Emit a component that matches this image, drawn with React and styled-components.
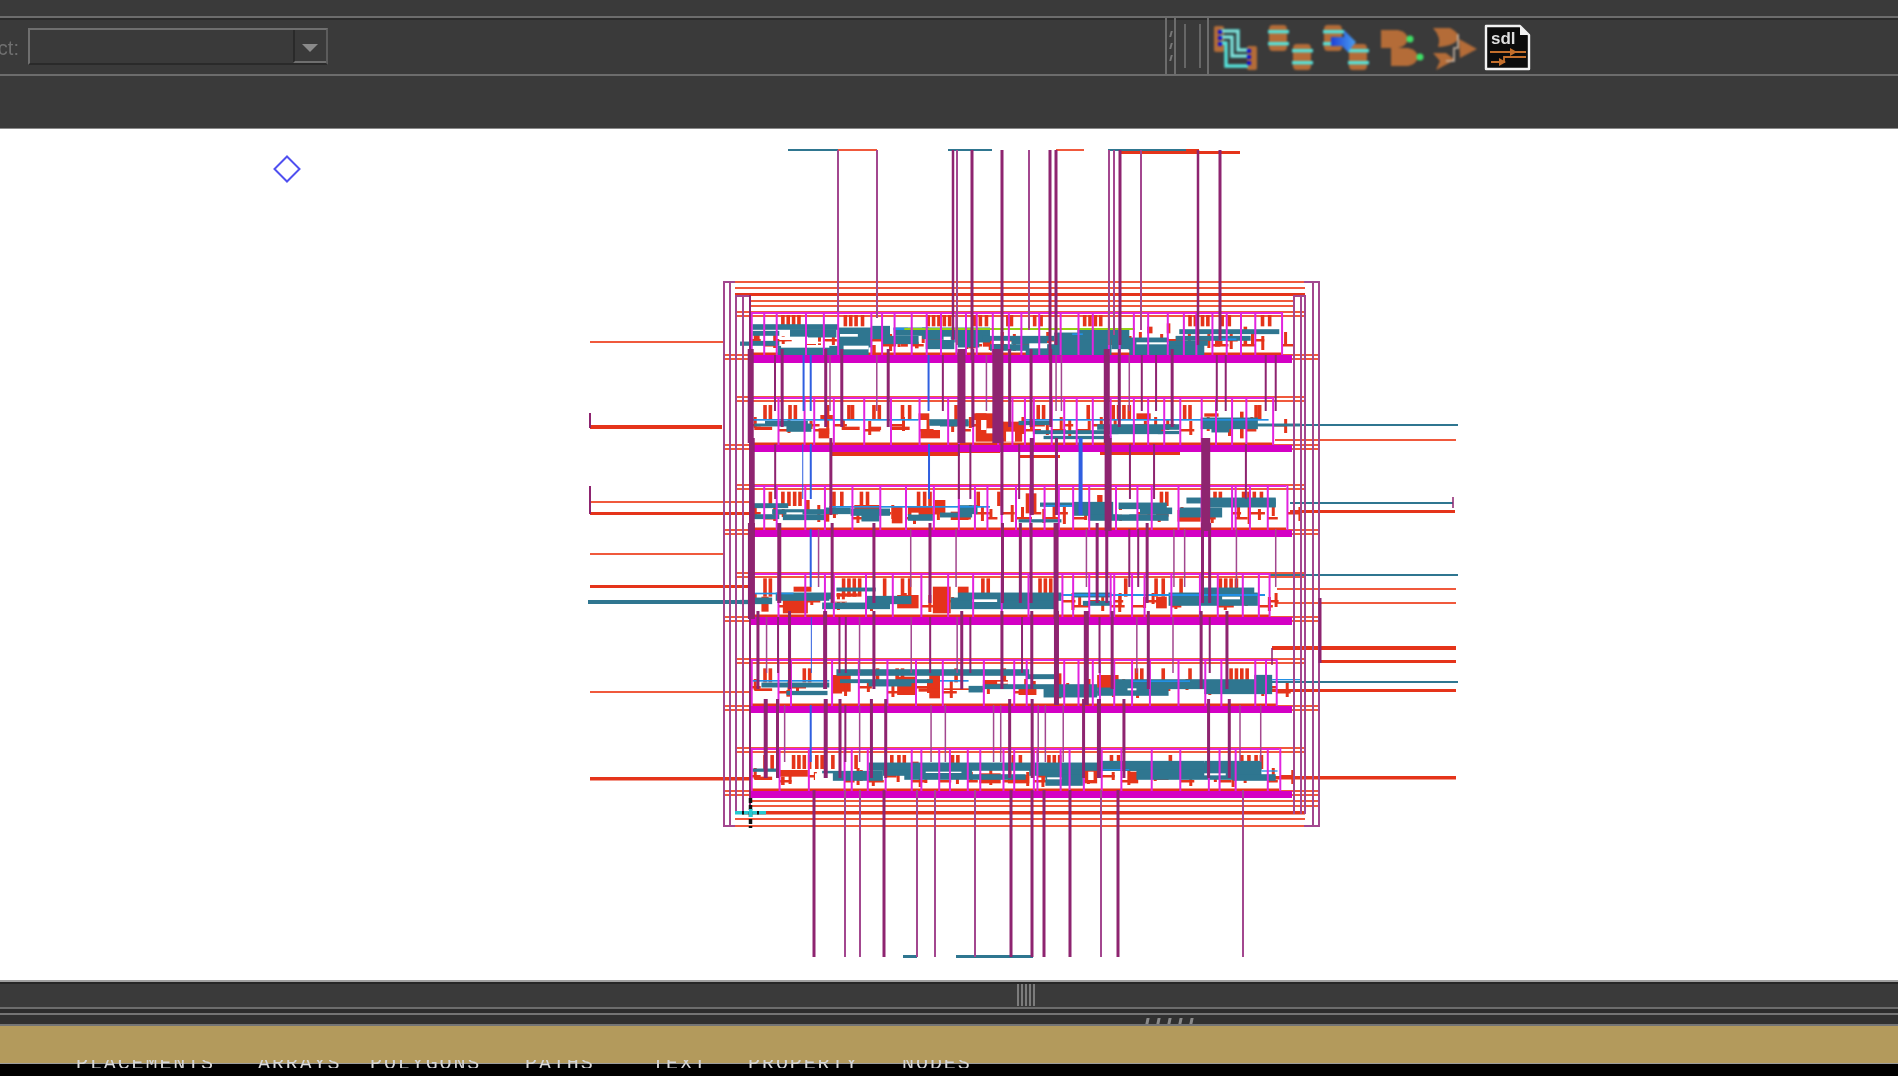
import styled, { createGlobalStyle } from 'styled-components';

const Global = createGlobalStyle`
  html, body { margin: 0; padding: 0; background: #000; overflow: hidden; }
  #root { width: 1898px; height: 1076px; }
`;

const RED = '#e5341a';
const ORANGE = '#f0593c';
const TEAL = '#2f7690';
const PURPLE = '#8e2470';
const THIN = '#a3478f';
const BLUE = '#2f5fe0';
const SKY = '#2290e4';
const GREEN = '#93d014';
const MAGENTA = '#d400c4';
const CELL = '#e124de';

// zoom crop coordinates -> page coordinates
const rowX = (x) => 740 + x / 2.8;
const wideX = (x) => 580 + x / 1.742;

const rows = [
  {
    base: 305, top: 312, rail: 355, railEnd: 363, right: 1281, barY: [30, 64],
    cells: [30, 65, 100, 182, 232, 272, 365, 395, 430, 478, 520, 560, 603, 630, 660, 705, 750, 785, 835, 895, 945, 985, 1030, 1060, 1100, 1140, 1195, 1240, 1275, 1320, 1360, 1400, 1440, 1515],
    bars: [115, 130, 145, 160, 290, 305, 320, 338, 522, 537, 552, 567, 582, 652, 668, 685, 745, 755, 820, 838, 960, 975, 990, 1005, 1255, 1270, 1290, 1305, 1345, 1365, 1458, 1478],
    blocks: [[450, 115, 470, 125], [490, 110, 500, 130], [590, 80, 610, 95], [640, 100, 660, 130], [680, 110, 700, 125], [1140, 65, 1155, 85], [1195, 55, 1205, 85], [1330, 100, 1345, 125], [1410, 65, 1420, 80], [1410, 95, 1420, 120], [1060, 90, 1085, 110], [370, 120, 380, 150], [40, 88, 55, 105], [400, 90, 420, 105]],
    teal: [[35, 60, 275, 72], [35, 80, 110, 90], [30, 110, 110, 120], [105, 125, 360, 148], [140, 75, 270, 95], [275, 70, 370, 125], [370, 65, 420, 100], [400, 95, 500, 115], [430, 70, 530, 90], [510, 70, 700, 100], [520, 105, 600, 130], [600, 85, 700, 110], [610, 110, 670, 125], [680, 95, 880, 105], [700, 120, 890, 135], [760, 100, 860, 115], [800, 130, 950, 148], [880, 85, 1040, 148], [945, 75, 1090, 100], [1040, 100, 1200, 130], [1090, 120, 1300, 148], [1200, 110, 1310, 120], [1220, 95, 1430, 105], [1230, 75, 1510, 85], [0, 112, 35, 120]],
    white: [[110, 95, 190, 105], [115, 120, 250, 128], [130, 110, 240, 115], [280, 87, 330, 95], [290, 122, 360, 133], [570, 95, 590, 105], [810, 115, 860, 130], [1110, 112, 1200, 118]],
    sky: [[430, 68, 470, 75], [930, 85, 960, 90], [1340, 100, 1390, 106]],
    green: [[460, 69, 1105, 75]],
  },
  {
    base: 305, top: 397, rail: 445, railEnd: 452, right: 1272, barY: [300, 345],
    cells: [30, 105, 178, 205, 260, 345, 420, 500, 580, 610, 650, 720, 760, 795, 820, 870, 905, 940, 985, 1035, 1100, 1140, 1185, 1230, 1290, 1330, 1375, 1415, 1490],
    bars: [65, 80, 135, 150, 300, 310, 370, 385, 450, 470, 240, 1240, 1255, 1440, 1450, 1040, 1055, 1070, 1085, 830, 845, 600, 970],
    blocks: [[40, 365, 90, 375], [285, 365, 335, 375], [365, 365, 395, 375], [425, 365, 475, 375], [500, 325, 530, 345], [505, 375, 560, 400], [660, 325, 720, 410], [655, 325, 690, 345], [725, 350, 790, 410], [1110, 325, 1150, 345], [1300, 325, 1340, 335], [1400, 320, 1410, 400], [225, 330, 260, 345], [220, 370, 250, 400]],
    teal: [[70, 350, 190, 358], [130, 360, 200, 378], [530, 345, 640, 360], [560, 350, 640, 362], [780, 350, 870, 358], [820, 378, 1060, 385], [850, 395, 1040, 400], [1000, 360, 1230, 372], [1040, 370, 1180, 385], [1170, 380, 1230, 385], [1290, 340, 1450, 370], [1320, 370, 1370, 380], [1440, 358, 1568, 362], [40, 358, 200, 362]],
    white: [[675, 345, 690, 375], [690, 370, 715, 385], [745, 380, 770, 410]],
    sky: [[35, 342, 500, 347], [800, 342, 1480, 347]],
    green: [],
  },
  {
    base: 480, top: 485, rail: 530, railEnd: 537, right: 1286, barY: [35, 78],
    cells: [30, 65, 100, 180, 235, 312, 390, 462, 540, 610, 655, 690, 730, 770, 810, 850, 890, 930, 975, 1050, 1110, 1150, 1225, 1290, 1375, 1385, 1425, 1475, 1530],
    bars: [115, 132, 148, 163, 258, 280, 335, 352, 495, 512, 527, 662, 720, 1175, 1190, 1405, 1420, 1435, 1455, 1325, 1340, 80],
    blocks: [[425, 80, 455, 130], [320, 75, 390, 100], [185, 60, 195, 90], [470, 80, 540, 105], [545, 60, 575, 100], [590, 95, 640, 120], [800, 40, 830, 100], [1000, 45, 1015, 70], [1225, 90, 1290, 125], [1165, 100, 1200, 110], [235, 100, 250, 125]],
    teal: [[35, 72, 135, 82], [35, 105, 110, 115], [90, 90, 240, 100], [120, 105, 240, 118], [240, 85, 310, 100], [310, 88, 420, 105], [340, 95, 390, 122], [470, 105, 540, 120], [610, 78, 665, 100], [560, 100, 650, 110], [780, 120, 900, 125], [840, 70, 930, 78], [935, 68, 1045, 105], [975, 105, 1200, 120], [1060, 70, 1195, 85], [1120, 85, 1210, 100], [1250, 55, 1500, 68], [1230, 85, 1350, 110], [1390, 58, 1500, 78], [1290, 70, 1500, 80]],
    white: [[130, 97, 175, 103], [1060, 90, 1090, 103], [480, 98, 500, 104]],
    sky: [[250, 78, 700, 83], [850, 75, 930, 80]],
    green: [],
  },
  {
    base: 480, top: 573, rail: 617, railEnd: 625, right: 1269, barY: [295, 350],
    cells: [30, 105, 180, 235, 260, 350, 425, 505, 580, 650, 730, 805, 900, 930, 975, 1035, 1045, 1095, 1130, 1205, 1285, 1335, 1405, 1450, 1480],
    bars: [65, 80, 285, 300, 315, 330, 400, 450, 470, 675, 690, 835, 850, 865, 880, 1075, 1160, 1180, 1230, 1340, 1355, 1370, 1385],
    blocks: [[120, 340, 190, 400], [150, 320, 200, 335], [270, 340, 330, 350], [440, 345, 500, 385], [540, 320, 590, 400], [610, 320, 640, 340], [800, 340, 900, 350], [1165, 350, 1195, 385], [60, 350, 80, 395]],
    teal: [[35, 355, 90, 370], [100, 340, 260, 360], [230, 370, 420, 385], [270, 325, 380, 332], [350, 350, 480, 370], [590, 355, 890, 385], [610, 340, 900, 360], [930, 340, 1040, 350], [960, 365, 1040, 375], [1200, 340, 1450, 375], [1290, 325, 1440, 340], [0, 362, 35, 370]],
    white: [[250, 358, 330, 365], [650, 358, 720, 366], [1350, 350, 1400, 358]],
    sky: [[35, 338, 150, 343], [900, 342, 1470, 348]],
    green: [],
  },
  {
    base: 655, top: 659, rail: 706, railEnd: 713, right: 1276, barY: [40, 82],
    cells: [30, 105, 140, 255, 330, 410, 490, 565, 680, 765, 800, 905, 945, 985, 1005, 1045, 1095, 1145, 1225, 1300, 1345, 1440, 1470, 1500],
    bars: [65, 80, 175, 190, 380, 435, 450, 600, 735, 1105, 1120, 1180, 1255, 1370, 1385, 1400, 1415],
    blocks: [[530, 60, 560, 130], [500, 100, 560, 110], [570, 100, 680, 105], [680, 75, 750, 95], [780, 90, 830, 120], [440, 65, 490, 120], [880, 55, 900, 130], [1000, 60, 1060, 100], [1165, 97, 1205, 108], [260, 60, 310, 110], [40, 100, 90, 108], [130, 105, 140, 125]],
    teal: [[270, 45, 810, 60], [60, 85, 250, 95], [130, 110, 245, 118], [280, 75, 540, 82], [360, 85, 480, 92], [680, 90, 1000, 100], [640, 95, 680, 110], [800, 60, 880, 70], [850, 100, 1000, 125], [1000, 100, 1200, 120], [1050, 75, 1490, 100], [1300, 100, 1490, 115], [1440, 62, 1490, 100]],
    white: [[1085, 100, 1110, 106], [720, 80, 750, 86]],
    sky: [[35, 75, 250, 80], [560, 75, 640, 80], [1100, 76, 1260, 81], [1490, 72, 1568, 76]],
    green: [],
  },
  {
    base: 655, top: 748, rail: 791, railEnd: 798, right: 1279, barY: [300, 342],
    cells: [30, 108, 190, 290, 310, 355, 405, 478, 505, 555, 585, 635, 670, 735, 765, 820, 830, 895, 920, 960, 1010, 1065, 1150, 1230, 1310, 1340, 1385, 1475, 1510],
    bars: [65, 85, 145, 160, 175, 190, 210, 225, 255, 320, 420, 440, 455, 590, 605, 760, 780, 860, 875, 890, 1035, 1055, 1200, 1400, 1420, 1440, 1455],
    blocks: [[110, 345, 190, 365], [40, 365, 90, 375], [480, 320, 500, 345], [965, 340, 1000, 385], [1090, 350, 1115, 385], [1160, 365, 1200, 375], [560, 365, 610, 370], [670, 355, 730, 385], [750, 360, 810, 385], [115, 365, 125, 390]],
    teal: [[230, 350, 400, 375], [360, 325, 1460, 345], [400, 345, 650, 360], [460, 360, 800, 372], [810, 345, 960, 360], [855, 360, 960, 390], [1000, 320, 1300, 345], [1110, 345, 1380, 372], [1300, 320, 1460, 365], [1380, 360, 1500, 375], [35, 343, 110, 348]],
    white: [[210, 355, 260, 380], [520, 350, 620, 354], [975, 350, 990, 375], [1300, 355, 1360, 361], [860, 367, 900, 373]],
    sky: [[1015, 342, 1090, 346], [1460, 346, 1505, 350]],
    green: [],
  },
];

// vertical wires between the rows: [x, width, colour flag]
const gaps = [
  {
    y1: 363, y2: 397, x: rowX,
    lines: [[30, 6], [98, 2], [118, 3], [178, 2, 'b'], [198, 2, 'b'], [240, 3], [252, 1.5], [285, 3], [383, 1.5], [415, 3], [528, 2, 'b'], [568, 2], [620, 8], [652, 3], [690, 1.5], [722, 11], [755, 3], [815, 3], [870, 3], [885, 1.5], [900, 1.5], [1027, 6], [1062, 3], [1090, 1.5], [1125, 2], [1165, 2], [1210, 3], [1335, 2], [1360, 2], [1472, 2], [1500, 2]],
  },
  {
    y1: 452, y2: 485, x: wideX,
    lines: [[300, 5], [340, 2], [388, 1, 'b'], [402, 2, 'b'], [437, 3], [608, 2, 'b'], [660, 2], [680, 2], [735, 3], [765, 2], [787, 4], [830, 3], [872, 4, 'b'], [920, 7], [958, 2], [1000, 2], [1090, 9], [1160, 2]],
  },
  {
    y1: 537, y2: 573, x: rowX,
    lines: [[32, 7], [110, 4], [198, 2, 'b'], [220, 1.5], [258, 3], [375, 3], [478, 1.5], [532, 3], [605, 1.5], [735, 3], [785, 3], [815, 3], [885, 5], [970, 1.5], [1000, 3], [1027, 3], [1090, 2], [1115, 2], [1140, 3], [1215, 1.5], [1245, 1.5], [1295, 3], [1315, 3], [1390, 1.5], [1500, 1.5]],
  },
  {
    y1: 625, y2: 659, x: wideX,
    lines: [[310, 3], [325, 1.5], [345, 2], [365, 3], [403, 1, 'b'], [427, 4], [452, 2], [463, 2], [487, 1.5], [512, 3], [577, 1.5], [610, 2], [657, 1.5], [665, 3], [680, 2], [735, 3], [770, 2], [787, 3], [830, 5], [882, 5], [905, 2], [927, 3], [970, 1.5], [990, 3], [1033, 1.5], [1082, 3], [1097, 2], [1127, 3]],
  },
  {
    y1: 713, y2: 748, x: rowX,
    lines: [[72, 4], [105, 3], [125, 1.5], [198, 2, 'b'], [240, 4], [280, 3], [295, 2], [335, 1.5], [368, 3], [408, 3], [535, 1.5], [575, 1.5], [710, 1.5], [730, 1.5], [755, 3], [818, 3], [835, 1.5], [855, 1.5], [905, 1.5], [962, 3], [1005, 4], [1075, 3], [1312, 3], [1370, 3], [1400, 1.5], [1458, 1.5]],
  },
];

const topPins = [[838, 2, 312], [877, 2, 318], [953, 2.5, 340], [957, 2, 345], [972, 3, 360], [1002, 3, 350], [1029, 2, 330], [1050, 3, 360], [1056, 3, 345], [1109, 2, 345], [1114, 2, 335], [1120, 3, 345], [1141, 2, 330], [1198, 2.5, 345], [1220, 3, 340]];
const bottomPins = [[814, 3], [845, 2], [860, 2], [884, 3], [917, 2], [935, 2], [975, 2], [1011, 3], [1032, 3], [1044, 3], [1070, 3], [1101, 2], [1118, 3], [1243, 2]];

// [x1, x2, y, height, colour]
const wires = [
  [788, 838, 149, 2, TEAL], [838, 877, 149, 2, ORANGE], [948, 992, 149, 2, TEAL], [1056, 1084, 149, 2, ORANGE], [1108, 1186, 149, 2, TEAL], [1186, 1199, 149, 2, RED], [1120, 1240, 151, 3, RED],
  [903, 917, 955, 3, TEAL], [956, 1033, 955, 3, TEAL],
  [590, 723, 341, 2, ORANGE], [590, 722, 425, 4, RED], [590, 750, 501, 2, ORANGE], [590, 750, 512, 3, RED], [590, 725, 553, 2, ORANGE], [590, 750, 585, 3, RED], [588, 750, 600, 4, TEAL], [590, 750, 691, 2, ORANGE], [590, 750, 777, 3.5, RED],
  [1280, 1458, 424, 2, TEAL], [1275, 1456, 439, 2, ORANGE], [1290, 1453, 502, 2, TEAL], [1290, 1455, 510, 3, RED], [1269, 1458, 574, 2, TEAL], [1277, 1456, 588, 2, ORANGE], [1275, 1456, 602, 2, ORANGE], [1272, 1456, 646, 4, RED], [1320, 1456, 660, 3, RED], [1272, 1458, 681, 2, TEAL], [1272, 1456, 689, 3, RED], [1272, 1456, 776, 3.5, RED],
  [723, 1318, 281, 2, ORANGE], [735, 1305, 287, 2, ORANGE], [735, 1305, 293, 3, RED], [749, 1293, 300, 2, ORANGE], [749, 1293, 305, 2, ORANGE],
  [749, 1318, 800, 2, ORANGE], [749, 1318, 805, 2, ORANGE], [742, 1305, 811, 3.5, RED], [735, 1305, 818, 2, ORANGE], [723, 1318, 825, 2, ORANGE],
  [830, 960, 452, 4, RED], [960, 1000, 449, 4, RED], [1100, 1180, 452, 3, RED], [1020, 1060, 455, 3, RED],
];

const stubs = [[590, 413, 428, 2], [590, 486, 514, 2], [1453, 497, 508, 1.5], [1320, 598, 663, 3], [1272, 648, 665, 1.5]];
const frame = [723, 729, 735, 742, 749, 1293, 1300, 1304, 1312, 1318];

const Rect = ({ x1, y1, x2, y2, fill }) => <rect x={x1} y={y1} width={x2 - x1} height={y2 - y1} fill={fill} />;

const Patches = ({ list, row, fill, pad = 0 }) =>
  list.map(([a, b, c, d], i) => (
    <Rect key={i} x1={rowX(a)} x2={rowX(c)} y1={row.base + b / 3 - pad} y2={row.base + d / 3 + pad} fill={fill} />
  ));

const Row = ({ row }) => {
  const left = rowX(row.cells[0]);
  const mid = row.top + 20;
  return (
    <g>
      {[-1, 3].map((d) => (
        <Rect key={d} x1={723} x2={1318} y1={row.rail + d} y2={row.rail + d + 2} fill={ORANGE} />
      ))}
      <Rect x1={736} x2={1305} y1={row.top - 1} y2={row.top + 1} fill={ORANGE} />
      <Rect x1={736} x2={1305} y1={row.top + 3} y2={row.top + 5} fill={ORANGE} />
      <Rect x1={left} x2={row.right} y1={row.rail - 2.5} y2={row.rail} fill={RED} />
      {row.bars.map((b) => (
        <Rect key={b} x1={rowX(b)} x2={rowX(b) + 3.6} y1={row.base + row.barY[0] / 3} y2={row.base + row.barY[1] / 3} fill={RED} />
      ))}
      <Patches list={row.blocks} row={row} fill={RED} />
      {row.cells.map((c, i) => (
        <g key={c}>
          <Rect x1={rowX(c) + 3 + (i * 7) % 11} x2={rowX(c) + 6 + (i * 7) % 11} y1={mid + (i % 3) * 2} y2={mid + 11 + (i * 5) % 9} fill={RED} />
          <Rect x1={rowX(c) + 1} x2={rowX(c) + 10 + (i * 3) % 8} y1={mid + 7 + (i * 5) % 10} y2={mid + 9.5 + (i * 5) % 10} fill={RED} />
        </g>
      ))}
      <Patches list={row.teal} row={row} fill={TEAL} pad={0.8} />
      <Patches list={row.white} row={row} fill="#fff" />
      <Patches list={row.sky} row={row} fill={SKY} />
      <Patches list={row.green} row={row} fill={GREEN} />
      {row.cells.map((c) => (
        <Rect key={c} x1={rowX(c)} x2={rowX(c) + 2} y1={row.top} y2={row.rail} fill={CELL} />
      ))}
      <Rect x1={left} x2={row.right} y1={row.top} y2={row.top + 2} fill={CELL} />
      <Rect x1={left - 1} x2={1292} y1={row.rail} y2={row.railEnd} fill={MAGENTA} />
    </g>
  );
};

const Layout = () => (
  <Drawing viewBox="0 129 1898 851">
    <path d="M287 156.5 L299.5 169 L287 181.5 L274.5 169 Z" fill="none" stroke="#5050f0" strokeWidth="2" />
    {wires.map(([a, b, y, h, c], i) => (
      <Rect key={i} x1={a} x2={b} y1={y} y2={y + h} fill={c} />
    ))}
    {rows.map((r) => (
      <Row key={r.top} row={r} />
    ))}
    {frame.map((x) => (
      <Rect key={x} x1={x} x2={x + 2} y1={x < 732 || x > 1310 ? 281 : 295} y2={x < 732 || x > 1310 ? 827 : 814} fill={x === 749 ? PURPLE : THIN} />
    ))}
    <Rect x1={723} x2={735} y1={281} y2={283} fill={THIN} />
    <Rect x1={735} x2={749} y1={295} y2={297} fill={THIN} />
    <Rect x1={1304} x2={1318} y1={281} y2={283} fill={THIN} />
    <Rect x1={1293} x2={1304} y1={295} y2={297} fill={THIN} />
    <Rect x1={723} x2={735} y1={825} y2={827} fill={THIN} />
    <Rect x1={1304} x2={1318} y1={825} y2={827} fill={THIN} />
    {gaps.map((g) =>
      g.lines.map(([x, w, flag]) => (
        <Rect
          key={g.y1 + '-' + x}
          x1={g.x(x) - w / 2}
          x2={g.x(x) + w / 2}
          y1={g.y1 - (w >= 3 ? 14 : 8)}
          y2={g.y2 + (w >= 5 ? 46 : w >= 3 ? 30 : 14)}
          fill={flag ? BLUE : w >= 2 ? PURPLE : THIN}
        />
      ))
    )}
    {topPins.map(([x, w, end]) => (
      <Rect key={x} x1={x - w / 2} x2={x + w / 2} y1={150} y2={end} fill={w >= 2.5 ? PURPLE : THIN} />
    ))}
    {bottomPins.map(([x, w]) => (
      <Rect key={x} x1={x - w / 2} x2={x + w / 2} y1={790} y2={957} fill={w >= 2.5 ? PURPLE : THIN} />
    ))}
    {stubs.map(([x, a, b, w], i) => (
      <Rect key={i} x1={x - w / 2} x2={x + w / 2} y1={a} y2={b} fill={PURPLE} />
    ))}
    <g>
      <Rect x1={735} x2={766} y1={811} y2={814.5} fill="#25c8d0" />
      <path d="M750.5 798V828" stroke="#101010" strokeWidth="3.5" strokeDasharray="5 2" />
      <Rect x1={742} x2={744} y1={811} y2={814.5} fill="#101010" />
      <Rect x1={757} x2={759} y1={811} y2={814.5} fill="#101010" />
      <Rect x1={749} x2={752.5} y1={809} y2={817} fill="#25c8d0" />
    </g>
  </Drawing>
);

const Barrel = ({ x, y }) => (
  <g>
    <rect x={x + 1} y={y} width="18" height="26" rx="4" fill="#b46c38" />
    <rect x={x} y={y + 5} width="21" height="3.4" fill="#55e2da" />
    <rect x={x} y={y + 17} width="21" height="3.4" fill="#55e2da" />
  </g>
);

const RouteIcon = () => (
  <Icon width="47" height="48" viewBox="0 0 47 48">
    <rect x="2" y="2" width="10" height="26" rx="2" fill="#b46c38" />
    <rect x="35" y="22" width="10" height="24" rx="2" fill="#b46c38" />
    <path d="M8 7H26V26H36 M8 13H20V32H36 M8 19H14V42H36" fill="none" stroke="#55e2da" strokeWidth="3.4" />
    <path d="M8 7H26V26H36 M8 13H20V32H36" fill="none" stroke="#bcd8d4" strokeWidth="1" />
    {[8, 14, 20].map((y) => <rect key={y} x="6" y={y - 2} width="4" height="4" fill="#1010d0" />)}
    {[27, 33, 39].map((y) => <rect key={y} x="35" y={y - 2} width="4" height="4" fill="#1010d0" />)}
  </Icon>
);

const BarrelIcon = () => (
  <Icon width="47" height="48" viewBox="0 0 47 48">
    <Barrel x={1} y={1} />
    <Barrel x={25} y={20} />
  </Icon>
);

const SwapIcon = () => (
  <Icon width="47" height="48" viewBox="0 0 47 48">
    <Barrel x={1} y={1} />
    <Barrel x={26} y={20} />
    <defs>
      <linearGradient id="arrowFill" x1="0" x2="1">
        <stop offset="0" stopColor="#1f40d8" />
        <stop offset="1" stopColor="#4aa0f0" />
      </linearGradient>
    </defs>
    <path d="M9 13H22V6L34 18L26 28L20 22H9Z" fill="url(#arrowFill)" />
  </Icon>
);

const Gate = ({ x, y }) => (
  <g>
    <path d={`M${x} ${y}H${x + 17}Q${x + 26} ${y + 2} ${x + 27} ${y + 9}Q${x + 26} ${y + 16} ${x + 17} ${y + 18}H${x}Z`} fill="#b46c38" />
    <circle cx={x + 29} cy={y + 9} r="3.5" fill="#3fe066" />
  </g>
);

const GateIcon = () => (
  <Icon width="47" height="48" viewBox="0 0 47 48">
    <Gate x={4} y={6} />
    <Gate x={14} y={24} />
  </Icon>
);

const MergeIcon = () => (
  <Icon width="47" height="48" viewBox="0 0 47 48">
    <path d="M1 4H18Q26 8 27 13Q24 22 6 23Q10 14 1 4Z" fill="#b46c38" />
    <path d="M1 29H14L23 36L4 46L8 37Z" fill="#b46c38" />
    <path d="M27 15L45 25L28 34Z" fill="#b46c38" />
    <path d="M26 10V24H22V37H14" fill="none" stroke="#c9b8a8" strokeWidth="1.6" />
  </Icon>
);

const SdlIcon = () => (
  <SdlSvg width="47" height="48" viewBox="0 0 47 48">
    <path d="M2 2H36L45 11V45H2Z" fill="#0c0c0c" stroke="#f2f2f2" strokeWidth="2.4" strokeLinejoin="round" />
    <path d="M36 2V11H45Z" fill="#f2f2f2" />
    <SdlText x="7" y="20">sdl</SdlText>
    <path d="M6 28H42 M7 38H20V33H42" fill="none" stroke="#c46f2c" strokeWidth="1.8" />
    <path d="M26 24L33 28L26 32Z M15 34L22 38L15 42Z" fill="#c46f2c" />
  </SdlSvg>
);

const Toolbar = () => (
  <ToolRow>
    <Label><span>Select:</span></Label>
    <Combo>
      <ComboArrow />
    </Combo>
    <Spring />
    <Divider />
    <GripDots>
      {[0, 1, 2].map((i) => <i key={i} />)}
    </GripDots>
    <Divider />
    <GripBars />
    <Divider />
    <Icons>
      <RouteIcon />
      <BarrelIcon />
      <SwapIcon />
      <GateIcon />
      <MergeIcon />
      <SdlIcon />
    </Icons>
  </ToolRow>
);

const tabs = [
  ['PLACEMENTS', 76],
  ['ARRAYS', 258],
  ['POLYGONS', 370],
  ['PATHS', 525],
  ['TEXT', 652],
  ['PROPERTY', 748],
  ['NODES', 902],
];

export default function App() {
  return (
    <Page>
      <Global />
      <Header>
        <TopStrip />
        <Toolbar />
        <EmptyStrip />
      </Header>
      <Canvas>
        <Layout />
      </Canvas>
      <ScrollRow>
        <ScrollGrip />
      </ScrollRow>
      <ThinRow />
      <TickRow>
        {[0, 1, 2, 3, 4].map((i) => <Tick key={i} />)}
      </TickRow>
      <TanBand />
      <TabStrip>
        {tabs.map(([t, x], i) => (
          <Tab key={t} $gap={i === 0 ? x : x - tabs[i - 1][1] - tabs[i - 1][0].length * 13.9}>{t}</Tab>
        ))}
      </TabStrip>
    </Page>
  );
}

const Page = styled.div`
  width: 1898px;
  height: 1076px;
  display: flex;
  flex-direction: column;
  overflow: hidden;
  background: #000;
  filter: blur(0.6px);
`;

const Header = styled.div`
  height: 129px;
  display: flex;
  flex-direction: column;
  background: #3a3a3a;
  flex: none;
`;

const TopStrip = styled.div`
  height: 16px;
  border-bottom: 2px solid #6c6c6c;
  box-sizing: content-box;
`;

const ToolRow = styled.div`
  height: 56px;
  display: flex;
  align-items: stretch;
  border-bottom: 2px solid #6c6c6c;
  box-shadow: inset 0 2px 0 #2b2b2b;
`;

const Label = styled.div`
  width: 19px;
  margin-right: 9px;
  overflow: hidden;
  display: flex;
  justify-content: flex-end;
  align-items: center;
  padding-top: 4px;
  font: 20px "Liberation Sans", sans-serif;
  color: #6f6f6f;
  white-space: nowrap;
`;

const Combo = styled.div`
  width: 300px;
  height: 37px;
  margin-top: 10px;
  box-sizing: border-box;
  display: flex;
  justify-content: flex-end;
  background: #3a3a3a;
  border: 2px solid #6f6f6f;
  border-right-color: #5c5c5c;
  border-bottom-color: #2a2a2a;
`;

const ComboArrow = styled.div`
  width: 31px;
  border-left: 2px solid #2a2a2a;
  border-bottom: 2px solid #6f6f6f;
  position: relative;
  &::after {
    content: '';
    position: absolute;
    left: 7px;
    top: 14px;
    border-left: 8px solid transparent;
    border-right: 8px solid transparent;
    border-top: 8px solid #8a8a8a;
  }
`;

const Spring = styled.div`
  width: 837px;
  flex: none;
`;

const Divider = styled.div`
  width: 2px;
  margin-right: 1px;
  background: #6c6c6c;
  flex: none;
`;

const GripDots = styled.div`
  width: 6px;
  display: flex;
  flex-direction: column;
  justify-content: center;
  align-items: center;
  gap: 6px;
  i {
    width: 2px;
    height: 6px;
    background: #777;
    transform: skewX(-15deg);
  }
`;

const GripBars = styled.div`
  width: 30px;
  display: flex;
  justify-content: center;
  gap: 13px;
  padding: 6px 0 6px;
  box-sizing: border-box;
  &::before, &::after {
    content: '';
    width: 2px;
    background: #666;
  }
`;

const Icons = styled.div`
  display: flex;
  align-items: center;
  gap: 8px;
  padding: 4px 0 0 2px;
`;

const Icon = styled.svg`
  flex: none;
  filter: blur(1px);
`;

const SdlSvg = styled.svg`
  flex: none;
  margin-left: -3px;
  filter: blur(0.6px);
`;

const SdlText = styled.text`
  font: bold 17px "Liberation Sans", sans-serif;
  fill: #dedede;
`;

const EmptyStrip = styled.div`
  flex: 1;
  border-bottom: 1px solid #8a8a8a;
`;

const Canvas = styled.div`
  height: 851px;
  background: #fff;
  flex: none;
`;

const Drawing = styled.svg`
  display: block;
  width: 1898px;
  height: 851px;
`;

const ScrollRow = styled.div`
  height: 25px;
  flex: none;
  display: flex;
  justify-content: center;
  background: #3a3a3a;
  border-top: 2px solid #a0a0a0;
  box-shadow: inset 0 2px 0 #262626;
  padding-left: 156px;
  box-sizing: content-box;
  width: 1742px;
`;

const ScrollGrip = styled.div`
  width: 20px;
  margin: 2px 0 1px;
  background: repeating-linear-gradient(90deg, #7c7c7c 0 2px, #3a3a3a 2px 4px);
`;

const ThinRow = styled.div`
  height: 4px;
  flex: none;
  background: #2c2c2c;
  border-top: 2px solid #6c6c6c;
  border-bottom: 2px solid #747474;
`;

const TickRow = styled.div`
  height: 8px;
  flex: none;
  background: #303030;
  border-bottom: 2px solid #747474;
  display: flex;
  gap: 8px;
  padding: 1px 0 0 1146px;
  align-items: flex-end;
`;

const Tick = styled.div`
  width: 3px;
  height: 6px;
  background: #8a8a8a;
  transform: skewX(-12deg);
`;

const TanBand = styled.div`
  height: 34px;
  flex: none;
  background: #b39a5c;
`;

const TabStrip = styled.div`
  height: 16px;
  flex: none;
  display: flex;
  overflow: hidden;
  background: linear-gradient(#b39a5c 3px, #9c9c9c 3px, #9c9c9c 4px, #000 4px);
`;

const Tab = styled.span`
  margin-left: ${(p) => p.$gap}px;
  margin-top: -6px;
  font: 20px/20px "Liberation Mono", monospace;
  letter-spacing: 1.9px;
  color: #d6d6d6;
  white-space: nowrap;
  height: 14px;
  overflow: hidden;
`;
